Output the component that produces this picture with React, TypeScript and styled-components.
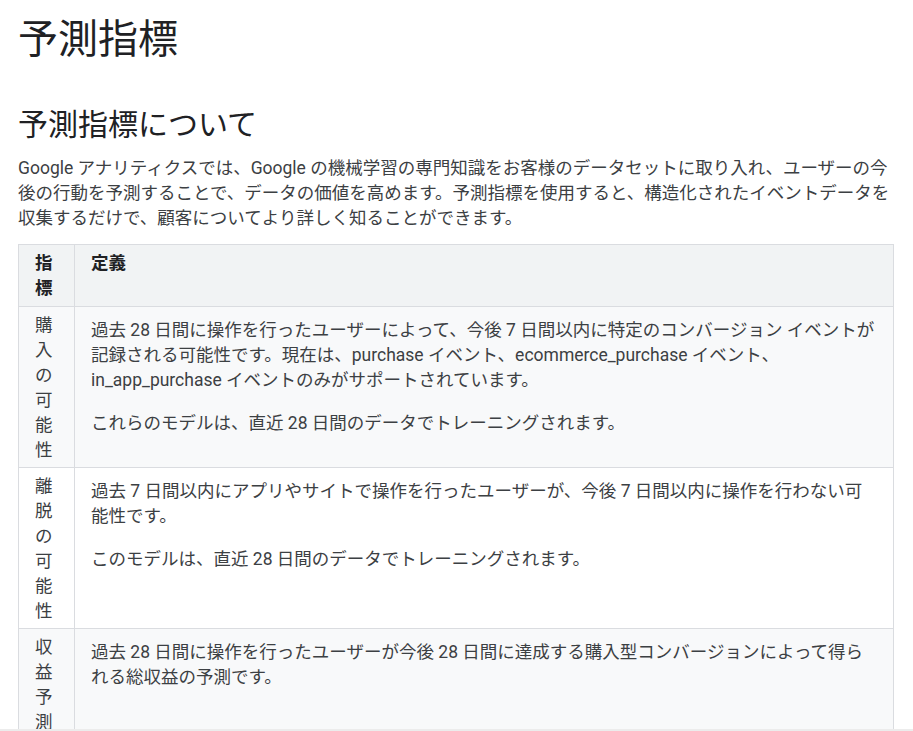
import React from 'react';
import styled, { createGlobalStyle } from 'styled-components';

const GlobalStyle = createGlobalStyle`
  html, body {
    margin: 0;
    padding: 0;
    background: #ffffff;
  }
  body {
    font-family: Roboto, "Noto Sans CJK JP", sans-serif;
    color: #3c4043;
    font-size: 17.5px;
    line-height: 25px;
    overflow: hidden;
  }
`;

const Page = styled.article`
  padding: 0 19px 0 18px;
`;

const Title = styled.h1`
  margin: 15px 0 0;
  font-size: 40px;
  line-height: 50px;
  font-weight: 400;
  color: #202124;
`;

const SectionTitle = styled.h2`
  margin: 40px 0 11px;
  font-size: 30px;
  line-height: 40px;
  font-weight: 400;
  color: #202124;
`;

const Intro = styled.p`
  margin: 0 0 13px;
`;

const Table = styled.table`
  width: 100%;
  border-collapse: collapse;
  table-layout: fixed;
  border: 1px solid #dadce0;
`;

const Row = styled.tr<{ shaded?: boolean }>`
  background: ${p => (p.shaded ? '#f8f9fa' : '#ffffff')};
  border-top: 1px solid #dadce0;
`;

const HeadRow = styled.tr`
  background: #f1f3f4;
`;

const HeadCell = styled.th<{ narrow?: boolean }>`
  width: ${p => (p.narrow ? '23px' : 'auto')};
  padding: 6px 16px 5px;
  text-align: left;
  vertical-align: top;
  font-weight: 700;
  color: #202124;
  border-left: 1px solid #dadce0;
`;

const Cell = styled.td<{ narrow?: boolean }>`
  padding: ${p => (p.narrow ? '6px 16px 4px' : '11px 16px 4px')};
  vertical-align: top;
  border-left: 1px solid #dadce0;
`;

const Para = styled.p`
  margin: 0;
  & + & {
    margin-top: 18px;
  }
`;

const BottomEdge = styled.div`
  position: fixed;
  left: 0;
  right: 0;
  bottom: 0;
  height: 2px;
  background: #ececec;
`;

const metrics = [
  {
    name: '購入の可能性',
    text: [
      '過去 28 日間に操作を行ったユーザーによって、今後 7 日間以内に特定のコンバージョン イベントが記録される可能性です。現在は、purchase イベント、ecommerce_purchase イベント、in_app_purchase イベントのみがサポートされています。',
      'これらのモデルは、直近 28 日間のデータでトレーニングされます。',
    ],
  },
  {
    name: '離脱の可能性',
    text: [
      '過去 7 日間以内にアプリやサイトで操作を行ったユーザーが、今後 7 日間以内に操作を行わない可能性です。',
      'このモデルは、直近 28 日間のデータでトレーニングされます。',
    ],
  },
  {
    name: '収益予測',
    text: [
      '過去 28 日間に操作を行ったユーザーが今後 28 日間に達成する購入型コンバージョンによって得られる総収益の予測です。',
    ],
  },
];

export default function App() {
  return (
    <>
      <GlobalStyle />
      <Page>
        <Title>予測指標</Title>
        <SectionTitle>予測指標について</SectionTitle>
        <Intro>
          Google アナリティクスでは、Google の機械学習の専門知識をお客様のデータセットに取り入れ、ユーザーの今後の行動を予測することで、データの価値を高めます。予測指標を使用すると、構造化されたイベントデータを収集するだけで、顧客についてより詳しく知ることができます。
        </Intro>
        <Table>
          <thead>
            <HeadRow>
              <HeadCell narrow>指標</HeadCell>
              <HeadCell>定義</HeadCell>
            </HeadRow>
          </thead>
          <tbody>
            {metrics.map((m, i) => (
              <Row key={m.name} shaded={i % 2 === 0}>
                <Cell narrow>{m.name}</Cell>
                <Cell>
                  {m.text.map((t, j) => (
                    <Para key={j}>{t}</Para>
                  ))}
                </Cell>
              </Row>
            ))}
          </tbody>
        </Table>
      </Page>
      <BottomEdge />
    </>
  );
}
